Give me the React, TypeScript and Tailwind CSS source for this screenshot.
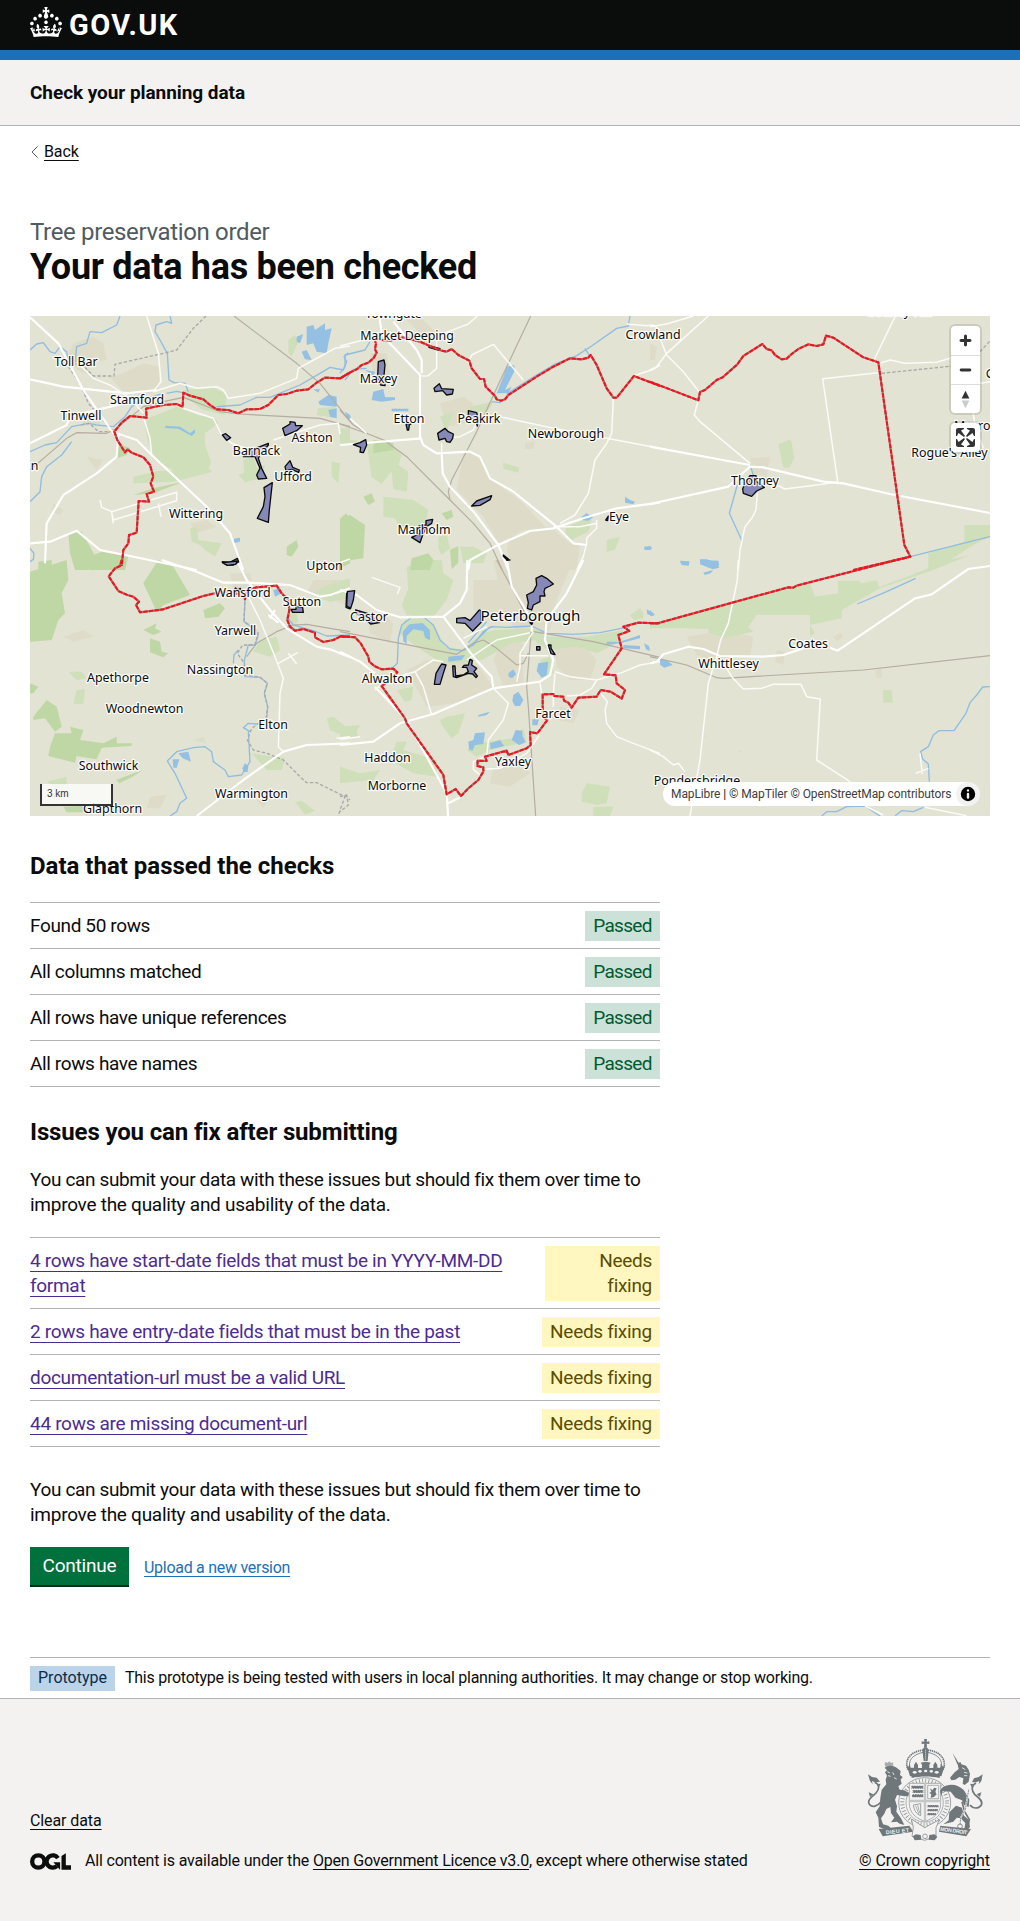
import type { ReactNode } from "react";

type Tile = {
  x: number;
  y: number;
  urban?: string;
  light?: string;
  wood?: string;
  lake?: string;
  river?: string;
  rail?: string;
  dash?: string;
  minor?: string;
  road?: string;
  area?: string;
  limit?: string;
};

// Each tile is drawn at three units to the pixel, from its own origin.
const tiles: Tile[] = [
  {
    x: 30,
    y: 310,
    urban:
      "M130 100l60-20 30 20 10 50-60 10 20 40-50-20-30-40zM280 190l60-30 50 10-5 70-50 20-60-20-35-40zM180 300l40 10-10 30-60 10zM480 640l50-10 30 20-60 20zM70 580l30 20-10 15-25-10zM170 440l50 10-20 30z",
    light:
      "M355 325L440 290 500 315 555 325 565 340 525 370 525 405 543 455 535 480 460 497 375 450 355 400 345 350zM460 240L550 233 590 252 585 315 520 300 470 265zM310 500L385 483 540 478 545 487 430 515 310 520zM625 495l80-30-10 40-50 10zM905 455l25 5-5 60-20-20zM930 355l30 0v45l-30 5zM865 295l50-5 5 35-60-10zM775 90l20-15 10 20-20 45-10-10zM480 655l20-5 5 40 70 10-20 40-30-20-15-15-25-10zM640 450l30-10 15 50-40 30z",
    wood:
      "M265 400l35 15-10 20-30 10zM115 670l40-5 50 90-30 25h-40l-15-50zM165 745l50-20 80 15-10 40h-105zM935 620l15-10 10 35-20 0zM770 710l30-20 5 20-20 30-15-5zM935 720l25-20v60l-20 10zM25 755l40-5v30h-40zM310 555l60-20 90-20-90 35z",
    lake:
      "M830 50l20-5 5 15 30-20v20l20-5-10 45-5 30-30-5-10-25-20 5zM800 80l20-8-10 28-10-5zM815 125l15-5 15 30-20-2zM850 238l20 0-5 10zM865 275l30-20 25 5 0 30-50-5zM895 300l25-5 0 30-20-5zM612 686l18-3v12l-18 4zM405 347l45 3 30 20 15-12 0 10-10 10-40-22-38-2z",
    river:
      "M0 120L20 102 40 98 60 125 75 130 90 110 110 125 115 160 M270 18L260 45 215 68 180 65 170 100 140 110 137 140 138 165 M420 18L425 40 410 35 378 45 375 65 390 90 412 130 417 210 432 218 465 220 475 245 M410 250L440 244 470 250 M560 290L630 285 680 262 720 262 810 225 870 190 900 172 940 180 950 155 942 140 955 128 M0 425L45 405 80 398 125 350 175 340 200 345 250 350 285 320 305 290 350 265 400 250 M0 575L30 545 35 500 50 470 95 435 125 395 M0 715L12 730 10 748 0 755",
    rail:
      "M612 18L800 160 870 220 960 333 M0 480L110 385 140 368 230 370 260 355 340 290 400 275 460 262 520 285 570 305 625 312 870 325 960 350",
    dash: "M528 18L490 55 440 120 400 130 255 163 252 198 190 198 162 170 M115 170L150 220 175 280 250 365 205 365 178 340 150 345",
    minor:
      "M350 18L385 130 393 215 370 245 M140 155L190 205 240 225 300 265 340 310 M370 245L450 220 500 235 560 230 580 240 595 265 690 250 800 205 805 175 915 115 960 108 M460 295L550 325 575 375 605 400 690 430 M730 390L870 345 925 340 930 372 M245 605L440 547V572L250 630zM210 570L215 592 245 605 250 640 M385 580L393 620 M340 320L360 385 365 435",
    road: "M0 22L85 100 160 240 250 370 M0 208L100 230 290 250 380 240 M0 400L110 345 120 320 280 280 M260 370L320 390 365 435 530 590 600 670 640 780 M265 375L260 440 200 490 100 555 50 640 45 760 M0 700L60 695 140 662 210 720 300 738 500 780",
    area:
      "M758 355L780 342 780 335 795 337 797 347 817 347 805 358 800 362 765 377zM577 375l10-4 15 12-12 8zM640 440L660 420 690 410 715 400 715 405 690 435 685 445 695 475 710 505 685 507 680 495 690 475 675 440zM765 470L780 452 788 472 808 480 806 487 785 478 768 482zM702 533L727 518 718 600 715 637 682 625 700 590 705 560zM577 755L600 757 622 745 626 756 610 765 590 765z",
    limit:
      "M960 188L930 205 885 203 860 218 835 238 800 242 770 252 745 255 715 285 690 297 650 298 625 310 595 300 560 298 540 285 520 268 480 257 460 248 458 290 440 282 400 285 348 296 350 323 300 318 275 338 253 365 262 390 285 427 293 418 305 428 340 442 360 465 370 500 362 520 372 545 350 552 357 575 326 573 320 668 297 675 295 700 280 720 275 768",
  },
  {
    x: 340,
    y: 310,
    urban:
      "M370 430L410 430 450 505 545 575 620 655 550 660 475 700 430 620 350 540zM510 680l120-30 60 50 30 5-10 75h-190l-20-60zM190 20l50 0 60 60-40 10zM90 130l50 0 10 70-50-10zM300 280l70-20 30 20-20 60-60 10zM555 400l30-8-5 25-25 0z",
    light:
      "M80 400l75 5 30 30-10 30 30 20-5 60-40-8-5-55-30 40-30-20zM130 560l90 10 45 30-10 45-75 10-15-30-35-5zM390 290l70-15-20 35-40 15zM300 320l40-15-20 60zM490 458l48 15-3 15-45-12zM680 650l50-20 25 0-10 35-50 25-20-20zM800 690l40-10-15 40-25 5zM360 710l40 0 40 20-10 30-60 0zM0 385l55 8-15 10-40 2zM295 680l25-5 10 40-25 20-10-20z",
    wood:
      "M70 560l25-10 10 25-20 10zM0 625l30-10 45 30-5 100-70 10zM215 745l50-15 15 20-10 30h-60zM305 610l30-10 5 20-20 10zM330 720l25-12 0 50-20 20zM100 390l60 10 0 20-60 10z",
    lake:
      "M470 250l20-50 10-30 22-5 3 15-30 60 20-10-10 18-25 2zM100 245l30-8 5 25 30 0v8l-40 5-30-5zM155 296h50v8h-50zM15 305l15 10 5 18-15-10zM855 560l15 10 15 5-5 8-25-5zM725 620l15-10 20 12-15 10-20-2zM912 710l20-2 0 12-18 0zM75 180l30 5-5 12z",
    river:
      "M870 18L865 48 830 55 755 108 710 137 645 162 590 195 500 252 M735 115L748 137 M455 275L480 278 500 260 M90 95L75 120 15 135 15 170 0 190 M80 175L40 178 15 210",
    rail:
      "M572 18L470 235 410 365 335 510 325 545 330 570 M0 300L40 345 85 372 135 392 200 440 330 570 400 640 450 700 487 780 M0 342L85 372",
    minor:
      "M412 18L385 42 350 55 300 75 M290 75L290 175 265 197 243 198 M385 160L395 135 460 103 550 210 M480 320L640 355 960 415 M320 385L360 380 400 360 410 340 M0 108L70 90 M305 400L305 430 M30 325L80 370 M820 265L815 370 800 400 765 450 745 550 705 615 660 640 M860 42L920 47 940 45 960 60 M640 650L720 650 770 640 770 630 M770 640L770 655 740 685 740 700 730 740 710 780 M880 198L940 178 960 165",
    road: "M118 18L125 70 145 95 240 195 240 380 250 405 290 430 390 425 420 440 450 505 520 545 650 650 700 700 740 705 M160 35L230 120 245 150 245 190 M0 405L245 385 M305 430L308 490 330 530 405 610 475 705 505 780 M385 780L390 750 470 707 570 663 640 655 730 625 830 595 960 578",
    area:
      "M115 155L132 150 135 165 132 195 135 215 135 227 122 225 113 200zM282 235L298 221 305 236 340 238 337 252 320 255 308 242 285 245zM385 302L410 308 415 330 412 348 405 330 385 318zM293 370L315 355 325 365 340 372 338 385 330 397 320 395 315 385 297 390zM40 404L60 398 77 389 80 405 70 428 60 426 62 412zM198 342h15l-5 3-2 15-4 0zM395 588l15-15 45-16-5 12-30 17zM215 682L240 670 237 648 258 645 258 632 278 628 275 640 262 648 250 670 240 698zM490 735l15 12-3 4-12-12zM797 630l8-12-2 14zM265 106l35 10-3 5-30-9zM0 762l5 0v18h-5z",
    limit:
      "M0 206L25 190 50 178 65 165 85 158 100 145 110 128 105 118 108 100 103 88 150 92 190 82 240 95 270 108 305 122 320 125 335 117 355 135 388 152 395 175 420 207 432 207 437 230 465 258 470 268 483 272 495 268 505 255 590 200 640 170 690 145 725 148 745 143 752 135 770 165 800 235 820 263 830 263 882 198 960 228",
  },
  {
    x: 650,
    y: 310,
    urban: "M300 445l60-5-10 60-40-10zM0 100l20 10-5 40-15 0z",
    light: "M385 403l38-15 10 55-15 30-18 0zM943 645h77v35l-50 25-85 55-50 15 0-45 108-35z",
    lake: "M150 748l20 0 30 10 8 15-20 5-38-15zM90 755l28 2-2 10-20-2zM0 710h5v8h-5z",
    river: "M300 465L310 495 M262 525L238 610 276 692 M781 740L900 710 1020 680",
    dash: "M695 190L870 172 905 168 M990 125L1020 93",
    minor:
      "M0 50L50 42 130 18 M735 20L672 150 M690 160L720 150 765 160 860 157 910 142 M685 188L518 206 563 514 M145 270L133 315 150 335 300 460 M563 516L500 525 405 537 350 510 M322 550L318 600 305 625 285 650 270 720 265 780 M20 60L50 135 100 185 148 246 M970 310L975 350 1000 415 M1020 215L960 225 M0 180L20 170 50 130 175 18",
    road: "M0 582L235 530 300 470 340 472 520 515 580 520 720 552 1020 609 M0 410L300 465",
    area: "M278 537L285 520 300 497 318 497 320 515 343 532 320 543 305 559 280 550z",
    limit:
      "M0 215L145 271 150 246 165 240 200 210 218 202 262 163 280 138 337 102 350 117 365 121 375 135 395 148 410 146 425 132 445 117 475 103 500 108 520 103 528 77 550 83 640 142 685 157 763 705 781 740 610 780",
  },
  {
    x: 30,
    y: 560,
    urban: "M600 40l60 0 10 40-60 10zM100 230l60-20 30 20-60 15zM360 710l50-5-20 40-40 0zM490 540l30-10 10 20zM850 60l110 0v80l-50-20-80-20zM680 720l30 5-10 20z",
    light:
      "M115 335l40 0 15 20-30 5zM795 725l20-3 40 30-30 12zM140 390l25-3-5 45-30 0zM880 80l80-25v60l-60 10-60-20zM770 160l30 0 5 25-20 12zM890 475l20-5 50 40-10 20-50-20zM665 580l100 15-10 35-45 0zM50 665l60-15 0 25-30 10zM690 240l50-10 10 40-30 20-50-15z",
    wood:
      "M0 35l110-35 5 60-20 40 10 60-20 20-20 60-65 5zM385 0L430 20 480 105 400 135 380 155 340 70zM520 150l50-20 15 15-20 25-40 5zM340 210l40-20-5 15 20 10-25 10zM360 235l30 10 5 30 20 5-15 12-40-15zM10 470l40-50 30 20 15 60-20 15-30-40-35 5zM0 370l25 10-15 20-10 0zM60 560l15-40 50 0-5-20 40 10-10 30 70 10 40-20v20h45v8l-90 5-15 35-60-10-5 20-80-20zM258 660l80-30-30 20-40 20zM100 740l80-3-10 20-60 0z",
    lake: "M445 580l30-5 8 30-25-10zM428 598l20 0-8 25-10 0zM637 625l8-15 10 8-2 18-12 0zM730 90l20-5 5 15-20 10z",
    river:
      "M645 120L642 185 665 200 685 225 675 255 655 255 643 300 645 350 690 352 712 370 703 400 713 440 710 480 680 492 655 490 640 503 660 515 M610 310L612 285 625 270 M655 515L660 605 635 645 595 650 585 630 550 605 545 575 525 560 490 563 440 575 412 603 435 640 470 715 450 730 440 755 420 768 M770 170L790 195 850 212 890 228 960 225",
    rail: "M650 290L680 250 740 215 790 195 830 193 900 205 960 215",
    dash:
      "M645 110L642 185 685 215 675 255 638 255 622 280 643 310 645 345 690 352 712 370 703 400 713 440 708 475 665 505 652 540 670 570 710 580 760 600 810 650 830 668 860 668 945 710 930 750 925 768 M945 705L960 720",
    minor: "M655 110L690 180 735 290 760 355 750 400 745 560 760 575 M745 310L803 278 M775 280L800 312 M910 15L960 -3 M920 535L960 530",
    road: "M620 0L650 60 720 150 770 205 860 260 900 268 960 292 M395 0L500 35 580 68 660 68 780 75 870 110 900 105 960 85 M500 768L640 660 760 575 830 555 960 550 M715 165L745 188 M735 150L720 175",
    area: "M577 8l45-5-5 10-25 3zM783 148l15 0 0-10 20 5 2 14-32 0zM950 100l10-3v50l-12-5zM612 90l5-6 6 6 8-5 2 8z",
    limit:
      "M275 0L270 18 255 25 236 49 265 93 290 104 310 110 327 125 318 135 330 157 400 148 520 108 553 100 600 92 615 100 640 105 645 118 650 90 680 82 740 77 755 100 775 120 778 150 772 180 780 200 795 212 820 207 855 218 855 232 880 246 910 240 930 230 960 230",
  },
  {
    x: 340,
    y: 560,
    urban:
      "M80 160l60 10 20 20-10 60-60-30zM200 330l60-30 150 10 50 70-110 50-90 10zM460 0h240l-50 120-20 90-60 20-40-10-40-80zM400 60l90 0 40 120-70 10-60-40zM640 230l80 10 50 60-20 60-60 0-40-40zM460 620l80-10 30 30-60 40-60-10zM660 440l60 10-20 40-50-10zM490 230l60 20 0 120-60 10-30-80z",
    light:
      "M200 20l60-20 45 0 5 40 30 20-20 60-40 50-80-5-15-30 20-50zM175 220l20-40 50-10 40 30 30 60 50 10 60-50 40-10 90-5 60 5-20 30-80 10-90 50-60 10-60 0-60-40zM580 215l50 15 110 0 110-20-20 40-60 30-60-20-80 10-40-20zM300 480l20-10 55-10-20 60-20 15-30-40zM380 570l30-20 110-15 30-30 10 40-110 25-40 20zM600 300l30-10 10 50-30 15zM0 500l60-5-10 20 5 15-55 5zM870 165l30-20 10 15 0 15-30 5zM725 700l15-30 70 10-10 50-30 5-45-10zM760 740l60 0-10 28h-50zM170 390l50-10-5 40-20 5zM170 545l30 0-10 25 100 30 0 50-70-10-70-40zM0 620l60 20 60-10-20 30-100 10z",
    lake:
      "M188 215l20-22 40-4 22 22 0 30-15-8-5-20-30-5-20 20 0 25-10-10zM325 290l50-5-10 15-40 5zM520 405l15-10 15 25-10 18-15 0-8-15zM595 310l30-5-5 40-15 8-15-20zM505 340l15-12 8 15-12 12-10-5zM385 545l15-5 5-20 30-3-5 35-25 3-8 18-10-5zM450 550l30-10 12 18-40 10zM515 540l12-30 20 2 0 15 10 20-20 8zM800 245l40 0 60-20v10l-60 15-40 5zM850 255l50 3 0 10-50-3zM912 250l15 8 3 15-12-5zM920 148l20 12 0 8-18-5zM577 478l20 0-5 18-15 0zM415 465l35-10-10 10-25 5z",
    river:
      "M150 330L172 310 175 235 185 195 215 172 250 170 280 195 300 240 330 267 370 272 400 255 430 215 455 200 500 202 575 198 620 220 700 223 780 218 870 200 M385 248L440 185 M395 255L450 200",
    rail: "M470 0L530 110 575 200 568 280 560 380 565 440 587 768 M0 215L180 250 350 283 400 250 430 240 470 265 530 315 550 310 565 280 M580 215L760 245 960 292",
    dash: "M0 710L20 705 25 735 0 755",
    minor:
      "M95 52L180 82 172 103 M105 390L140 360 225 335 250 380 275 465 M225 335L280 300 310 305 M460 385L505 430 490 480 445 540 440 590 M400 628L400 605 430 592 M400 628L420 645 M430 628L480 625 560 580 595 530 600 500 M580 215L540 280 540 320 530 365 M540 287L625 287 M645 340L640 400 640 440 M645 335L690 350 770 360 840 340 900 315 960 305 M770 360L755 385 720 405 680 408 M775 390L802 425 795 450 800 490 830 530 880 550 960 580 M0 538L60 530 M600 370L605 400 M370 235L440 200 M380 300L470 240 570 218",
    road: "M0 90L50 105 110 150 180 172 310 170 360 130 380 90 382 0 M310 170L400 290 455 350 460 385 M0 275L60 305 105 340 M0 555L100 545 180 490 280 462 460 385 600 365 630 345 640 300 615 240 620 180 680 100 730 0 M500 0L515 80 575 180 575 215 M105 380L200 480 320 700 325 780 M325 730L360 712",
    area:
      "M22 95L44 92 40 120 32 145 20 138zM47 150L82 160 105 178 118 188 92 192 70 172 50 162zM350 175L375 173 390 182 418 150 423 152 423 180 425 185 398 213 375 190 350 188zM560 105L580 95 590 75 588 55 605 47 620 55 640 72 630 78 615 85 612 95 615 108 600 108 600 125 580 135 575 150 562 145 565 128zM283 373L288 340 300 320 305 312 318 315 310 340 300 373zM338 318L345 318 347 348 370 345 385 335 380 322 367 322 372 316 385 315 390 298 397 302 395 315 410 325 402 335 412 348 408 353 398 342 385 340 350 353 340 350zM590 260h10v10h-10zM625 255l8 0 0 10 10 15 2 4-12-3zM570 188l8 0-3 6zM500 0h10z",
    limit:
      "M0 228L45 232 62 250 85 290 88 305 103 318 125 328 160 326 172 337 150 360 125 378 195 475 200 490 310 645 320 703 347 687 363 708 385 685 415 660 430 635 430 622 412 618 413 602 440 603 435 590 500 572 505 585 560 565 572 555 570 516 592 520 622 480 608 470 608 403 640 402 643 408 670 410 672 422 685 428 695 443 715 413 770 410 782 390 812 395 845 416 855 390 830 370 827 346 792 343 845 265 835 225 868 213 850 200 895 188 960 190",
  },
  {
    x: 650,
    y: 560,
    urban:
      "M110 230l60-10 30 10 60-10 50 10-10 60-50-5-30 30-80-30zM380 270l25 5-5 40-25-10zM675 330l20-5 0 30-15 0zM550 230l20-12 10 12-20 12zM160 526l12 2-12 4zM262 575l12-4-6 8z",
    light:
      "M0 190L22 195 250 130 415 87 480 70 495 110 565 100 563 62 625 62 635 70 680 60 688 82 835 25 835 12 895 0 960 -15 850 30 690 85 575 150 575 175 480 195 495 220 480 228 480 165 320 165 295 200 310 215 220 235 175 220 175 207 100 205 0 205zM700 390l25 0 3 38-28 0z",
    lake: "M30 300l20 0 18 15-25 8-12-8zM90 2l28 2-2 12-20-2zM150 0l55 2 3 15-30-10zM160 38l30-8-8 10-18 5zM0 150l15 15-15 3zM0 268v5z",
    river:
      "M622 132L710 95 797 55 M1020 380L998 381 980 405 960 428 948 460 912 512 867 512 850 525 835 560 812 575 818 597 835 612 838 665 M515 768L530 755 560 755 590 740 645 738 690 768 M735 768L755 752 790 755 820 742",
    rail: "M0 290L110 315 200 353 220 355 640 330 1020 287",
    minor:
      "M265 0L262 60 235 190 212 240 200 290 175 370 150 600 120 768 M215 300L245 350 280 387 335 385 370 373 453 373 470 410 511 417 500 600 600 665 M0 570L40 590 70 615 85 610 105 635 M810 580L817 642 M797 640L835 625 M825 742L950 767 M645 738L700 765",
    road: "M0 310L20 305 40 283 115 260 160 267 210 288 340 290 400 285 460 265 M540 263L563 272 795 115 845 103 955 27 1020 18",
    limit: "M0 190L22 190 250 127 415 82 430 83 440 77 740 0 781 -10",
  },
];

type Kind = Exclude<keyof Tile, "x" | "y">;

const layers: { kind: Kind; fill?: string; stroke?: string; width?: number; dash?: string }[] = [
  { kind: "urban", fill: "#dedcc9" },
  { kind: "light", fill: "#cfdfba" },
  { kind: "wood", fill: "#bfd7a5" },
  { kind: "lake", fill: "#93c0e3" },
  { kind: "river", stroke: "#8fbde2", width: 4 },
  { kind: "dash", stroke: "#a9a9a9", width: 4, dash: "10 6" },
  { kind: "rail", stroke: "#b5aca2", width: 3.5 },
  { kind: "minor", stroke: "#fbfbf8", width: 4.5 },
  { kind: "road", stroke: "#ffffff", width: 6.5 },
  { kind: "area", fill: "#8688b8", stroke: "#0b0c0c", width: 4 },
  { kind: "limit", stroke: "#b36a6c", width: 6.5 },
  { kind: "limit", stroke: "#f0141e", width: 6, dash: "13 4" },
];

// Place names: text, horizontal centre, baseline, optional size.
const places: [string, number, number, number?][] = [
  ["Toll Bar", 76, 366],
  ["Stamford", 137, 403.5],
  ["Tinwell", 81, 419.5],
  ["n", 34.5, 470],
  ["Barnack", 256.5, 454.5],
  ["Ashton", 312, 442],
  ["Ufford", 293, 480.5],
  ["Wittering", 196, 518],
  ["Upton", 324.5, 570],
  ["Towngate", 393.5, 318],
  ["Market Deeping", 407, 339.5],
  ["Maxey", 378.5, 383],
  ["Etton", 409, 423],
  ["Peakirk", 479, 423],
  ["Newborough", 566, 438],
  ["Marholm", 424, 533.5],
  ["Eye", 619, 521],
  ["Crowland", 653, 339],
  ["Gedney Hill", 899, 316],
  ["Thorney", 755, 485],
  ["Murrow", 977, 430],
  ["Rogue's Alley", 949.5, 457],
  ["Guyhirn", 1009, 378],
  ["Wansford", 242.5, 597],
  ["Sutton", 302, 605.5],
  ["Yarwell", 235.5, 635],
  ["Castor", 369, 620.5],
  ["Nassington", 220, 674],
  ["Apethorpe", 118, 681.5],
  ["Woodnewton", 144.5, 713],
  ["Elton", 273, 729],
  ["Southwick", 108.5, 770],
  ["Warmington", 251.5, 798],
  ["Glapthorn", 112.5, 813],
  ["Peterborough", 530.5, 621, 15.2],
  ["Alwalton", 387, 682.5],
  ["Haddon", 387.5, 761.5],
  ["Morborne", 397, 790],
  ["Yaxley", 513, 766],
  ["Farcet", 553, 718],
  ["Coates", 808, 648],
  ["Whittlesey", 728.5, 668],
  ["Pondersbridge", 697, 784.5],
];

function MapCanvas() {
  return (
    <svg className="block h-[500px] w-[960px]" viewBox="30 316 960 500">
      <rect x="30" y="316" width="960" height="500" fill="#e2e3d3" />
      {layers.map((l, i) => (
        <g
          key={i}
          fill={l.fill ?? "none"}
          stroke={l.stroke ?? "none"}
          strokeWidth={l.width}
          strokeDasharray={l.dash}
          strokeLinejoin="round"
        >
          {tiles.map((t) => {
            const d = t[l.kind];
            return d ? <path key={`${t.x}-${t.y}`} d={d} transform={`translate(${t.x} ${t.y}) scale(.33333)`} /> : null;
          })}
        </g>
      ))}
      <g
        fontFamily="'Noto Sans', sans-serif"
        textAnchor="middle"
        fill="#0b0c0c"
        stroke="#fff"
        strokeOpacity=".85"
        strokeWidth="2.6"
        strokeLinejoin="round"
        style={{ paintOrder: "stroke" }}
      >
        {places.map(([name, x, y, size]) => (
          <text key={name} x={x} y={y} fontSize={size ?? 12.4}>
            {name}
          </text>
        ))}
      </g>
    </svg>
  );
}

function ControlIcon({ children }: { children: ReactNode }) {
  return (
    <button className="block size-[29px] text-[#333] not-first:border-t not-first:border-[#ddd]">
      <svg viewBox="0 0 29 29" className="block h-full w-full" fill="currentColor">
        {children}
      </svg>
    </button>
  );
}

function MapView() {
  return (
    <div className="relative mt-[29px] h-[500px] w-[960px] overflow-hidden">
      <MapCanvas />
      <div className="absolute top-[10px] right-[10px] flex flex-col gap-[10px]">
        <div className="overflow-hidden rounded-[4px] bg-white shadow-[0_0_0_2px_rgba(0,0,0,0.1)]">
          <ControlIcon>
            <path d="M14.5 8.5c-.75 0-1.5.75-1.5 1.5v3h-3c-.75 0-1.5.75-1.5 1.5S9.25 16 10 16h3v3c0 .75.75 1.5 1.5 1.5S16 19.75 16 19v-3h3c.75 0 1.5-.75 1.5-1.5S19.75 13 19 13h-3v-3c0-.75-.75-1.5-1.5-1.5z" />
          </ControlIcon>
          <ControlIcon>
            <path d="M10 13c-.75 0-1.5.75-1.5 1.5S9.25 16 10 16h9c.75 0 1.5-.75 1.5-1.5S19.75 13 19 13h-9z" />
          </ControlIcon>
          <ControlIcon>
            <path d="M10.5 14l4-8 4 8h-8z" />
            <path d="M10.5 16l4 8 4-8h-8z" fill="#ccc" />
          </ControlIcon>
        </div>
        <div className="overflow-hidden rounded-[4px] bg-white shadow-[0_0_0_2px_rgba(0,0,0,0.1)]">
          <ControlIcon>
            <path d="M24 16v5.5c0 1.75-.75 2.5-2.5 2.5H16v-1l3-1.5-4-5.5 1-1 5.5 4 1.5-3h1zM6 16l1.5 3 5.5-4 1 1-4 5.5 3 1.5v1H7.5C5.75 24 5 23.25 5 21.5V16h1zm7-11v1l-3 1.5 4 5.5-1 1-5.5-4L6 13H5V7.5C5 5.75 5.75 5 7.5 5H13zm11 2.5c0-1.75-.75-2.5-2.5-2.5H16v1l3 1.5-4 5.5 1 1 5.5-4 1.5 3h1V7.5z" />
          </ControlIcon>
        </div>
      </div>
      <div className="absolute bottom-[10px] left-[10px] h-[22px] w-[73px] border-2 border-t-0 border-[#333] bg-white/75 px-[5px] pt-px font-['Liberation_Sans',sans-serif] text-[10px] leading-[18px] text-[#333]">
        3 km
      </div>
      <div className="absolute right-[10px] bottom-[10px] flex h-[24px] w-[317px] items-center justify-between rounded-[12px] bg-white pl-[8px] text-[12px] leading-[20px] tracking-[-0.1px] whitespace-nowrap text-[#404040]">
        <span>
          MapLibre <span className="text-[#0b0c0c]">|</span> © MapTiler © OpenStreetMap contributors
        </span>
        <svg viewBox="0 0 20 20" className="size-[24px] rounded-full bg-black/5" fillRule="evenodd">
          <path d="M4 10a6 6 0 1 0 12 0 6 6 0 1 0-12 0m5-3a1 1 0 1 0 2 0 1 1 0 1 0-2 0m0 3a1 1 0 1 1 2 0v3a1 1 0 1 1-2 0" />
        </svg>
      </div>
    </div>
  );
}

function CrownLogo() {
  return (
    <svg viewBox="0 0 32 30" className="h-[30px] w-[32px]" fill="#fff">
      <path d="M22.6 10.4c-1 .4-2-.1-2.4-1-.4-.9.1-2 1-2.4.9-.4 2 .1 2.4 1s-.1 2-1 2.4m-5.9 6.7c-.9.4-2-.1-2.4-1-.4-.9.1-2 1-2.4.9-.4 2 .1 2.4 1s-.1 2-1 2.4m10.8-3.7c-1 .4-2-.1-2.4-1-.4-.9.1-2 1-2.4.9-.4 2 .1 2.4 1s0 2-1 2.4m3.3 4.8c-1 .4-2-.1-2.4-1-.4-.9.1-2 1-2.4.9-.4 2 .1 2.4 1s-.1 2-1 2.4M17 4.7l2.3 1.2V2.5l-2.3.7-.2-.2.9-3h-3.4l.9 3-.2.2c-.1.1-2.3-.7-2.3-.7v3.4L15 4.7c.1.1.1.2.2.2l-1.3 4c-.1.2-.1.4-.1.6 0 1.1.8 2 1.9 2.2h.7c1-.2 1.9-1.1 1.9-2.1 0-.2 0-.4-.1-.6l-1.3-4c-.1-.2 0-.2.1-.3m-7.6 5.7c.9.4 2-.1 2.4-1 .4-.9-.1-2-1-2.4-.9-.4-2 .1-2.4 1s0 2 1 2.4m-5 3c.9.4 2-.1 2.4-1 .4-.9-.1-2-1-2.4-.9-.4-2 .1-2.4 1s.1 2 1 2.4m-3.2 4.8c.9.4 2-.1 2.4-1 .4-.9-.1-2-1-2.4-.9-.4-2 .1-2.4 1s0 2 1 2.4m14.8 11c4.4 0 8.6.3 12.3.8 1.1-4.5 2.4-7 3.7-8.8l-2.5-.9c.2 1.3.3 1.9 0 2.7-.4-.4-.8-1.1-1.1-2.3l-1.2 4c.7-.5 1.3-.8 2-.9-1.1 2.5-2.6 3.1-3.5 3-1.1-.2-1.7-1.2-1.5-2.1.3-1.2 1.5-1.5 2.1-.1 1.1-2.3-.8-3-2-2.3 1.9-1.9 2.1-3.5.6-5.6-2.1 1.6-2.1 3.2-1.2 5.5-1.2-1.4-3.2-.6-2.5 1.6.9-1.4 2.1-.5 1.9.8-.2 1.1-1.7 2.1-3.5 1.9-2.7-.2-2.9-2.1-2.9-3.6.7-.1 1.9.5 2.9 1.9l.4-4.3c-1.1 1.1-2.1 1.4-3.2 1.4.4-1.2 2.1-3 2.1-3h-5.4s1.7 1.9 2.1 3c-1.1 0-2.1-.2-3.2-1.4l.4 4.3c1-1.4 2.2-2 2.9-1.9-.1 1.5-.2 3.4-2.9 3.6-1.9.2-3.4-.8-3.5-1.9-.2-1.3 1-2.2 1.9-.8.7-2.3-1.2-3-2.5-1.6.9-2.2.9-3.9-1.2-5.5-1.5 2-1.3 3.7.6 5.6-1.2-.7-3.1 0-2 2.3.6-1.4 1.8-1.1 2.1.1.2.9-.3 1.9-1.5 2.1-.9.2-2.4-.5-3.5-3 .6 0 1.2.3 2 .9l-1.2-4c-.3 1.1-.7 1.9-1.1 2.3-.3-.8-.2-1.4 0-2.7l-2.9.9C1.3 23 2.6 25.5 3.7 30c3.7-.5 7.9-.8 12.3-.8" />
    </svg>
  );
}

function OglLogo() {
  return (
    <svg viewBox="0 0 483 196" className="h-[17px] w-[41px] shrink-0" fill="none" stroke="#0b0c0c" strokeWidth="51">
      <circle cx="98" cy="98" r="72.5" />
      <path d="M329 59A72.5 72.5 0 1 0 316 152" />
      <path d="M275 106h80v88h-3z" fill="#0b0c0c" stroke="none" />
      <path d="M371 32l51-32v143h61v51H371z" fill="#0b0c0c" stroke="none" />
    </svg>
  );
}

function RoyalArms() {
  return (
    <svg viewBox="51 42 348 306" className="h-[102px] w-[116px]" fill="#6f777b" stroke="none">
      <path d="M222 42h9l-1 8 8-1v8l-8-1 1 12h-9l1-12-8 1v-8l8 1z" />
      <path d="M221 68h11l4 8-3 32h-12l-4-32z" />
      <path d="M227 74v32" stroke="#f3f2f1" strokeWidth="3" strokeDasharray="3 3" />
      <g fill="none" stroke="#6f777b">
        <path d="M174 134c-12-26 4-54 46-59M279 134c12-26-4-54-46-59" strokeWidth="5" strokeDasharray="4 2" />
        <path d="M181 130c-8-22 4-40 38-48M272 130c8-22-4-40-38-48" strokeWidth="2.5" />
      </g>
      <path d="M168 116l6 10 6-10v12l12 0v-8l6-10 6 10v9l12 0v-10l-4-6 15-3 15 3-4 6v10l12 0v-9l6-10 6 10v8l10 0v-12l8 10 6-8-8 24-4 12c-30-6-62-6-94 0l-4-14z" />
      <path d="M183 145c26-7 62-7 88 0l-2 14c-26-6-58-6-84 0z" />
      <g fill="#f3f2f1">
        <ellipse cx="194" cy="142" rx="6" ry="4" />
        <ellipse cx="210" cy="139" rx="5" ry="4" />
        <ellipse cx="227" cy="138" rx="5" ry="4" />
        <ellipse cx="244" cy="139" rx="5" ry="4" />
        <ellipse cx="260" cy="142" rx="6" ry="4" />
      </g>
      <g fill="none" stroke="#8b9194">
        <ellipse cx="224" cy="233" rx="78" ry="75" strokeWidth="2.5" />
        <ellipse cx="224" cy="233" rx="56" ry="58" strokeWidth="2" />
        <ellipse cx="224" cy="233" rx="67" ry="66" strokeWidth="12" strokeDasharray="2.5 7" />
      </g>
      <path d="M178 175h94v60c0 30-22 46-47 54-25-8-47-24-47-54z" fill="#f3f2f1" stroke="#8b9194" strokeWidth="2" />
      <path
        d="M184 182h36v9h-36zm4 13h32v9h-32zm-2 13h34v9h-34zM232 240h34v7h-34zm0 12h32v7h-32zm0 12h26v7h-26z"
        strokeWidth="3"
        stroke="#f3f2f1"
        strokeDasharray="2 5"
      />
      <path d="M225 175v114M178 228h94" stroke="#c3c7c8" strokeWidth="7" />
      <path d="M233 181h33v40h-33z" fill="none" stroke="#8b9194" strokeWidth="2" />
      <path d="M240 190l8 6 4-8 8 2-4 10 4 8-8 8-10 2 2-10-6-4 6-4z" />
      <path d="M190 240l22-4v36c-12-4-20-16-22-32z" fill="none" stroke="#8b9194" strokeWidth="2.5" />
      <path d="M197 242l10 26M203 240l6 24" stroke="#8b9194" strokeWidth="2" />
      {/* lion */}
      <path d="M104 116l3-6 5 4 6-5 5 5 6-2 1 10-24 3z" fill="#a7acae" />
      <path d="M104 128c8-8 26-8 36 0l12 10-2 12 8 6-6 8 3 12-10 8 4 10 14 2 14 8-2 10-18-2-16-2-6 14 6 20-2 16 14 20 10 20-14-4-8-6-18 2 10-14-10-14-2-18-12 6-6 14-10 14 6 18 16 4 8 8-20 2-16-6-2-28-8-16 12-18 2-26 4-24 14-16-2-14 4-12-6-10 6-6z" />
      <path d="M112 140l8 4m-6 8l8 2m6-12l4 8m0 8l8 4" stroke="#f3f2f1" strokeWidth="2.5" />
      <path d="M92 232c-8 10-26 18-34 6-8-14 10-24 20-34 12-14 10-26-4-32" fill="none" stroke="#6f777b" strokeWidth="5" />
      <path d="M54 148l12 8 14 2 10 12-14 2-10-4 2 10-8-10zM56 202l14 6-10 8zM82 178l10-2-6 12z" />
      {/* unicorn */}
      <path d="M308 84l18 30-4 4z" />
      <path d="M322 114l10-2 2 6 14 4 8 12 4 14-4 22-12 10-6-4 2-16-12-4-12 8-12 2-4-8 14-16 12-10z" />
      <path d="M336 128l10 6m-4 8l10 2m-10 8l10 0" stroke="#f3f2f1" strokeWidth="2.5" />
      <path d="M276 188c20-14 48-12 66 8l16 28-2 22-14-6-6-14-20-8-14-18-24-2-4 16-4-16z" />
      <path d="M298 262l20-20 18 6 6 24 14 12 4 22-8 8-9-2 3-18-14-14-12-2-10 12-30 8 16-12z" />
      <path d="M336 230l8 30 14 24-6 28" fill="none" stroke="#6f777b" strokeWidth="5" />
      <path d="M356 194l-10 60-14 24-2 22" fill="none" stroke="#f3f2f1" strokeWidth="5" />
      <path d="M356 194l-10 60-14 24-2 22" fill="none" stroke="#6f777b" strokeWidth="3" strokeDasharray="3 2" />
      <circle cx="330" cy="304" r="7" fill="none" stroke="#6f777b" strokeWidth="2.5" />
      <path d="M360 240c10 12 26 12 34 0 6-14-10-22-20-32-12-14-8-28 4-34" fill="none" stroke="#6f777b" strokeWidth="5" />
      <path d="M398 148l-12 8-14 4-6 12 12 0 10-4-2 10 8-10zM394 202l-14 6 10 8zM370 178l-10-2 6 12z" />
      {/* motto scroll */}
      <path d="M86 312l92-10 12 18-92 14zM271 302l92 10-14 22-82-14z" />
      <g fill="#f3f2f1" fontFamily="'Liberation Sans', sans-serif" fontWeight="700" fontSize="16">
        <text x="108" y="328" textLength="70" transform="rotate(-6 108 328)">
          DIEU ET
        </text>
        <text x="270" y="317" textLength="82" transform="rotate(8 270 317)">
          MON DROIT
        </text>
      </g>
      <path d="M184 282l40 26 44-24-10 24 0 26-34 12-38-12 4-28z" fill="#f3f2f1" stroke="#8b9194" strokeWidth="2.5" />
      <path d="M188 334l10-6 14 2 2 14-20 2zM238 330l16-2 8 8-8 10-18-2z" />
      <circle cx="225" cy="334" r="7" fill="none" stroke="#8b9194" strokeWidth="2.5" />
    </svg>
  );
}

const passed = ["Found 50 rows", "All columns matched", "All rows have unique references", "All rows have names"];

const issues = [
  { text: "4 rows have start-date fields that must be in YYYY-MM-DD format", wide: true },
  { text: "2 rows have entry-date fields that must be in the past" },
  { text: "documentation-url must be a valid URL" },
  { text: "44 rows are missing document-url" },
];

function IssuesNote({ className }: { className: string }) {
  return (
    <p className={`text-[19px] leading-[25px] tracking-[-0.36px] ${className}`}>
      You can submit your data with these issues but should fix them over time to
      <br />
      <span className="tracking-[-0.26px]">improve the quality and usability of the data.</span>
    </p>
  );
}

export default function App() {
  return (
    <div className="min-h-[1921px] w-[1020px] bg-white font-['Roboto',sans-serif] text-[#0b0c0c]">
      <header>
        <div className="flex h-[50px] items-start gap-[7px] bg-[#0b0c0c] px-[30px] pt-[7px]">
          <CrownLogo />
          <span className="text-[29px] leading-[36px] font-bold tracking-[1.4px] text-white">GOV.UK</span>
        </div>
        <div className="h-[10px] bg-[#1d70b8]" />
        <div className="h-[66px] border-b border-[#b1b4b6] bg-[#f3f2f1] px-[30px] pt-[20px]">
          <a className="text-[19px] leading-[25px] font-bold tracking-[-0.06px]">Check your planning data</a>
        </div>
      </header>

      <main className="px-[30px]">
        <a className="mt-[16px] flex h-[20px] items-center text-[16px] leading-[20px] tracking-[-0.1px]">
          <svg viewBox="0 0 8 12" className="mr-[6px] h-[12px] w-[8px]" fill="none" stroke="#505a5f">
            <path d="M7.5 .5L2 6l5.5 5.5" />
          </svg>
          <span className="underline decoration-1 underline-offset-[3px]">Back</span>
        </a>

        <div className="mt-[55px] text-[24px] leading-[30px] tracking-[-0.35px] text-[#505a5f]">Tree preservation order</div>
        <h1 className="text-[36px] leading-[40px] font-bold tracking-[-0.29px]">Your data has been checked</h1>

        <MapView />

        <div className="w-[630px]">
          <h2 className="mt-[35px] text-[24px] leading-[30px] font-bold">Data that passed the checks</h2>
          <dl className="mt-[21px] border-t border-[#b1b4b6] text-[19px] leading-[25px]">
            {passed.map((row) => (
              <div key={row} className="flex h-[46px] justify-between border-b border-[#b1b4b6] pt-[10px]">
                <dt className="tracking-[-0.37px]">{row}</dt>
                <dd className="-mt-[2px] h-[30px] w-[75px] bg-[#cce2d8] pt-[2px] text-center tracking-[-0.7px] text-[#005a30]">
                  Passed
                </dd>
              </div>
            ))}
          </dl>

          <h2 className="mt-[30px] text-[24px] leading-[30px] font-bold tracking-[-0.14px]">
            Issues you can fix after submitting
          </h2>
          <IssuesNote className="mt-[20px]" />
          <dl className="mt-[20px] border-t border-[#b1b4b6] text-[19px] leading-[25px]">
            {issues.map((row) => (
              <div key={row.text} className="flex items-start justify-between border-b border-[#b1b4b6] pt-[10px] pb-[10px]">
                <dt className="w-[485px] tracking-[-0.3px] text-[#4c2c92] underline decoration-1 underline-offset-[4px]">
                  {row.text}
                </dt>
                <dd
                  className={
                    row.wide
                      ? "-mt-[2px] -mb-[3px] w-[115px] bg-[#fff7bf] px-[8px] pt-[2px] pb-[3px] text-right tracking-[-0.3px] text-[#594d00]"
                      : "-mt-[2px] -mb-[3px] w-[118px] bg-[#fff7bf] pt-[2px] pb-[3px] text-center tracking-[-0.3px] whitespace-nowrap text-[#594d00]"
                  }
                >
                  Needs fixing
                </dd>
              </div>
            ))}
          </dl>
          <IssuesNote className="mt-[30px]" />
          <div className="mt-[20px] flex items-start gap-[15px]">
            <button className="h-[38px] w-[99px] bg-[#00703c] text-[19px] leading-[38px] tracking-[-0.2px] text-white shadow-[0_2px_0_#002d18]">
              Continue
            </button>
            <a className="mt-[11px] text-[16px] leading-[20px] tracking-[-0.28px] text-[#1d70b8] underline decoration-1 underline-offset-[3px]">
              Upload a new version
            </a>
          </div>
        </div>

        <div className="mt-[72px] flex h-[41px] items-start gap-[10px] border-t border-[#b1b4b6] pt-[8px] text-[16px] leading-[20px]">
          <strong className="h-[25px] w-[85px] bg-[#bbd4ea] pt-[2px] text-center font-normal text-[#0c2d4a]">Prototype</strong>
          <span className="pt-[2px] tracking-[-0.25px]">
            This prototype is being tested with users in local planning authorities. It may change or stop working.
          </span>
        </div>
      </main>

      <footer className="flex h-[223px] items-end justify-between border-t border-[#b1b4b6] bg-[#f3f2f1] px-[30px] pb-[50px] text-[16px] leading-[20px]">
        <div>
          <a className="tracking-[-0.1px] underline decoration-1 underline-offset-[3px]">Clear data</a>
          <div className="mt-[20px] flex items-center gap-[14px]">
            <OglLogo />
            <span className="tracking-[-0.18px]">
              All content is available under the{" "}
              <a className="underline decoration-1 underline-offset-[3px]">Open Government Licence v3.0</a>, except where
              otherwise stated
            </span>
          </div>
        </div>
        <div className="flex flex-col items-end">
          <div className="mr-[7px]">
            <RoyalArms />
          </div>
          <a className="mt-[10px] tracking-[-0.09px] underline decoration-1 underline-offset-[3px]">© Crown copyright</a>
        </div>
      </footer>
    </div>
  );
}
